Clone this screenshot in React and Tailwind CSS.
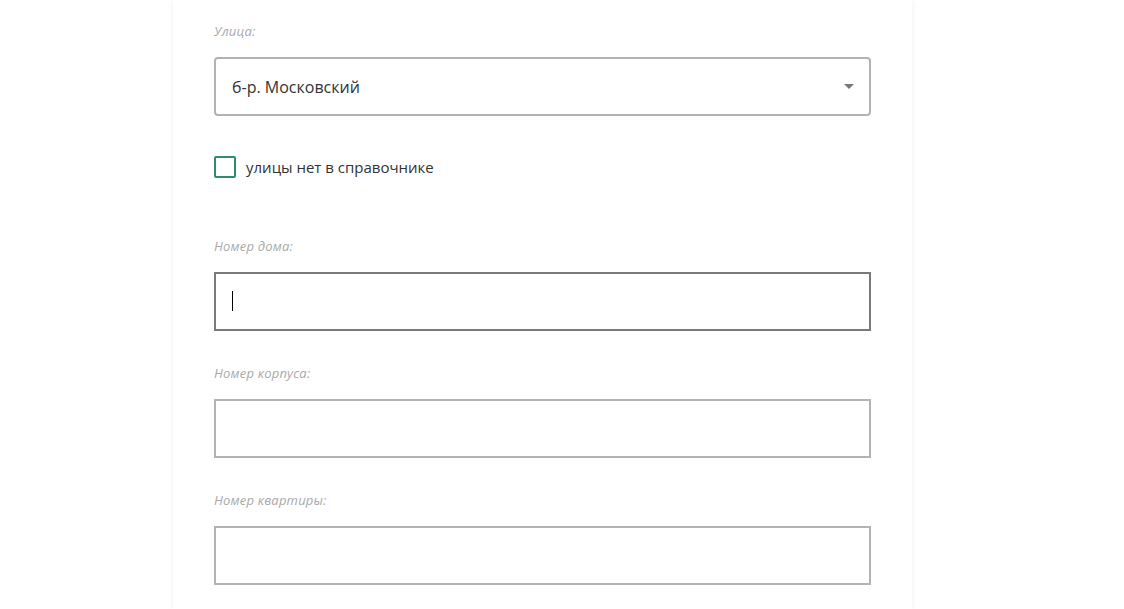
export default function App() {
  const fields = ["Номер дома:", "Номер корпуса:", "Номер квартиры:"];

  return (
    <div className="min-h-screen bg-white overflow-hidden" style={{ fontFamily: '"Open Sans", "Liberation Sans", sans-serif' }}>
      <div className="ml-[173px] w-[739px] min-h-[609px] bg-white px-[41px] pt-[22px] shadow-[0_0_6px_rgba(0,0,0,0.07)]">
        {/* Street */}
        <label className="block text-[13px] leading-[18px] italic text-[#a9a9a9] tracking-[0.2px]">Улица:</label>
        <div className="mt-[17px] h-[59px] flex items-center justify-between border-2 border-[#b3b3b3] rounded-[4px] pl-[16px] pr-[15px]">
          <span className="text-[16px] text-[#333]">б-р. Московский</span>
          <span className="w-0 h-0 border-l-[5px] border-r-[5px] border-t-[5px] border-l-transparent border-r-transparent border-t-[#777]" />
        </div>

        {/* Checkbox */}
        <div className="mt-[40px] flex items-center gap-[10px]">
          <span className="w-[22px] h-[22px] border-2 border-[#2f8a70] rounded-[2px]" />
          <span className="text-[15px] text-[#333]">улицы нет в справочнике</span>
        </div>

        {fields.map((f, i) => (
          <div key={f} className={i === 0 ? "mt-[58px]" : "mt-[33px]"}>
            <label className="block text-[13px] leading-[18px] italic text-[#a9a9a9] tracking-[0.2px]">{f}</label>
            <div
              className={`mt-[17px] h-[59px] flex items-center pl-[16px] border-2 ${
                i === 0 ? "border-[#7a7a7a]" : "border-[#b3b3b3]"
              }`}
            >
              {i === 0 && <span className="w-px h-[20px] bg-black" />}
            </div>
          </div>
        ))}
      </div>
    </div>
  );
}
